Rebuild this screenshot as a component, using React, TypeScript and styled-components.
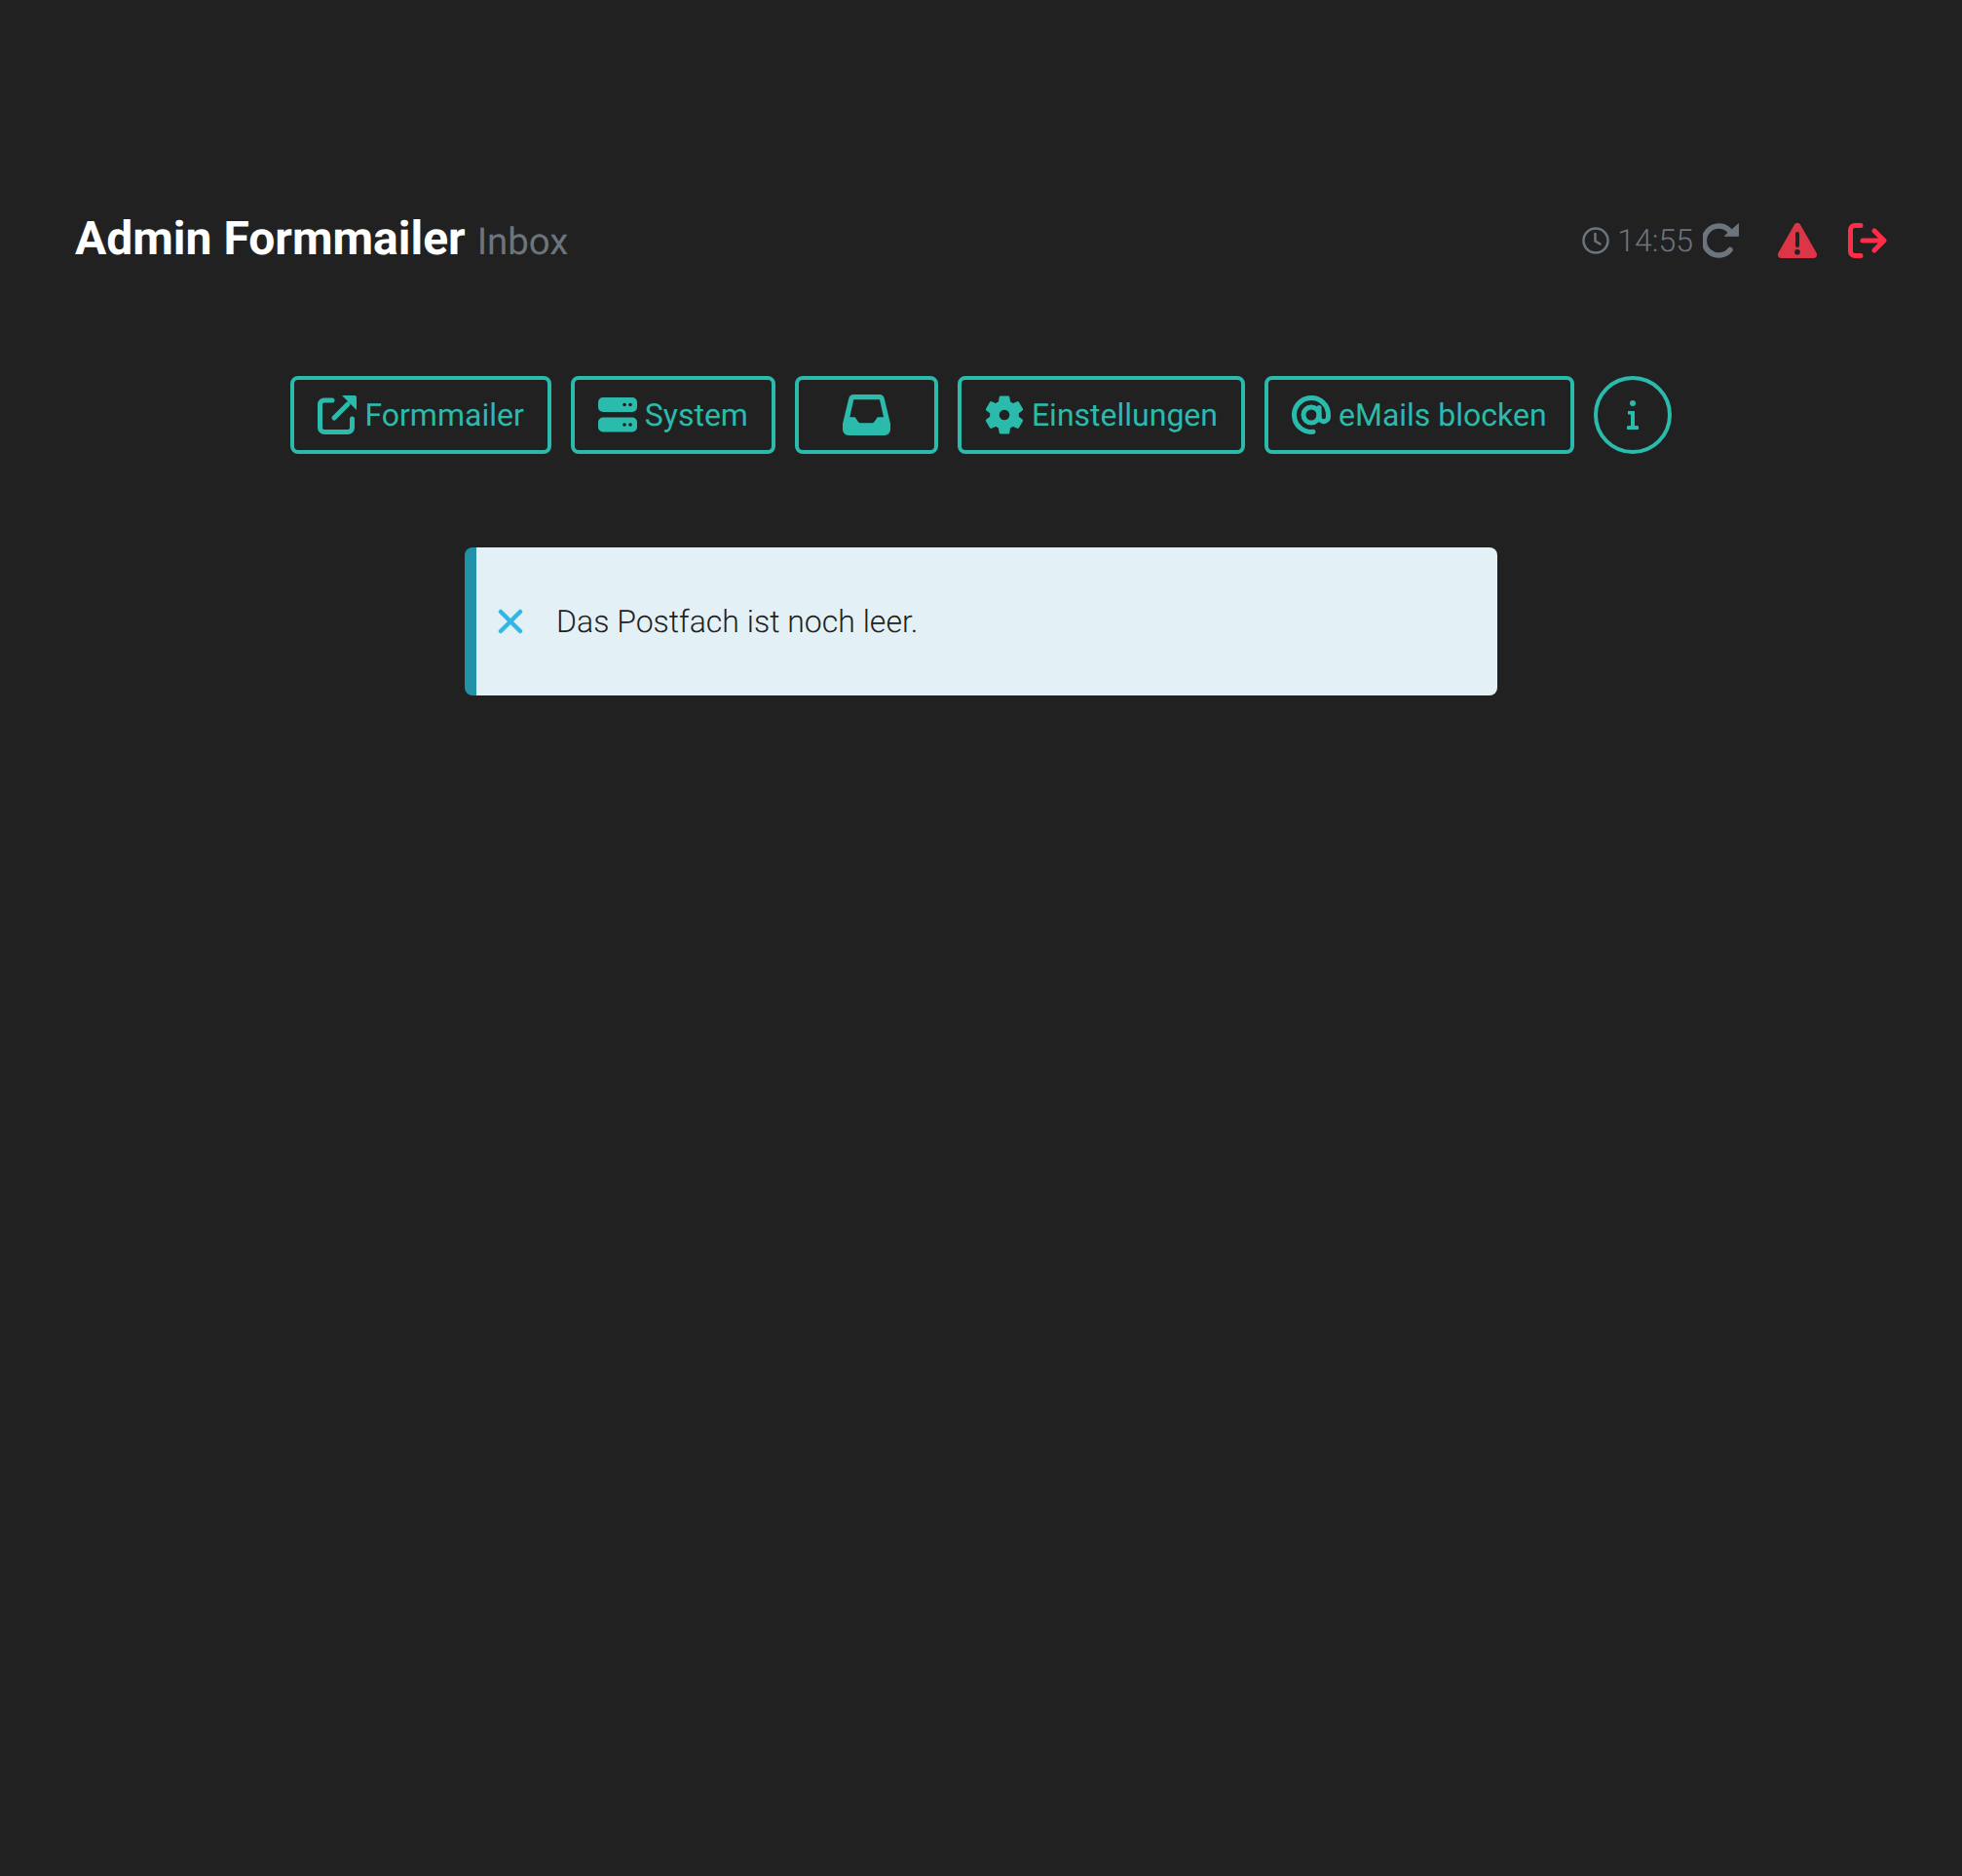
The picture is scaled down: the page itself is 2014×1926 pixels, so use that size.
import React from 'react'
import styled, { createGlobalStyle } from 'styled-components'

const GlobalStyle = createGlobalStyle`
  html, body {
    margin: 0;
    padding: 0;
    background: #212121;
  }
  body {
    font-family: Roboto, "Liberation Sans", sans-serif;
    text-rendering: geometricPrecision;
  }
`

const teal = '#2bbbad'
const danger = '#dc3545'
const logoutRed = '#ff2d46'
const muted = '#6c757d'

const Page = styled.div`
  min-height: 1926px;
  box-sizing: border-box;
  padding: 207px 77px 0;
  background: #212121;
`

const Header = styled.header`
  display: flex;
  align-items: center;
  justify-content: space-between;
  height: 80px;
`

const Title = styled.h1`
  margin: 0;
  font-size: 48px;
  line-height: 80px;
  font-weight: 700;
  color: #fff;
`

const SubTitle = styled.small`
  margin-left: 12px;
  font-size: 38.4px;
  font-weight: 400;
  color: ${muted};
`

const Status = styled.div`
  display: flex;
  align-items: center;
  color: ${muted};
`

const Time = styled.span`
  margin: 0 10px 0 8px;
  font-size: 32px;
  font-weight: 300;
`

const ActionIcon = styled.svg<{ $gap?: number }>`
  display: block;
  margin-left: ${(p) => p.$gap ?? 0}px;
`

const Nav = styled.nav`
  display: flex;
  justify-content: center;
  gap: 20px;
  margin-top: 99px;
`

const NavButton = styled.button`
  display: flex;
  align-items: center;
  justify-content: center;
  gap: 8px;
  box-sizing: border-box;
  height: 80px;
  padding: 0 24px;
  border: 4px solid ${teal};
  border-radius: 8px;
  background: transparent;
  color: ${teal};
  font-family: inherit;
  font-size: 32px;
  font-weight: 400;
  text-rendering: geometricPrecision;
`

const WideIconButton = styled(NavButton)`
  width: 147px;
  padding: 0;
`

const RoundButton = styled(NavButton)`
  width: 80px;
  padding: 0;
  border-radius: 50%;
`

const Alert = styled.div`
  display: flex;
  align-items: center;
  gap: 34px;
  box-sizing: border-box;
  width: 1060px;
  height: 152px;
  margin: 96px auto 0;
  padding-left: 22px;
  border-left: 12px solid #2191a8;
  border-radius: 8px;
  background: #e3f1f6;
  color: #212121;
  font-size: 32px;
  font-weight: 300;
`

const ExternalLinkIcon = () => (
  <svg width="40" height="40" viewBox="0 0 40 40" fill="none">
    <path d="M15 5H6.5A4 4 0 0 0 2.500 9v24a4.500 4.500 0 0 0 4.500 4.500h24a4.500 4.500 0 0 0 4.500-4.500V24" stroke={teal} strokeWidth="5" strokeLinecap="round" />
    <path d="M17 23 31 9" stroke={teal} strokeWidth="5" strokeLinecap="round" />
    <path d="M25 0h13a2 2 0 0 1 2 2v13z" fill={teal} />
  </svg>
)

const ServerIcon = () => (
  <svg width="40" height="36" viewBox="0 0 40 36" fill="none">
    <rect y="0" width="40" height="15" rx="5" fill={teal} />
    <rect y="20.500" width="40" height="15" rx="5" fill={teal} />
    <circle cx="27" cy="7.500" r="1.800" fill="#212121" />
    <circle cx="33" cy="7.500" r="1.800" fill="#212121" />
    <circle cx="27" cy="28" r="1.800" fill="#212121" />
    <circle cx="33" cy="28" r="1.800" fill="#212121" />
  </svg>
)

const InboxIcon = () => (
  <svg width="49" height="42" viewBox="0 0 49 42">
    <path
      fillRule="evenodd"
      fill={teal}
      d="M11.500 0h26a5.500 5.500 0 0 1 5.300 4.200L49 30v6a6 6 0 0 1-6 6H6a6 6 0 0 1-6-6v-6L6.200 4.200A5.500 5.500 0 0 1 11.500 0zM11.300 5.300 7.300 23.300h5.400l3 4.500q1 1.500 3 1.500h11q2 0 3-1.500l3-4.500H42l-4-18z"
    />
  </svg>
)

const GearIcon = () => (
  <svg width="40" height="40" viewBox="2.300 1.900 19.400 20.200">
    <path
      fill={teal}
      stroke={teal}
      strokeWidth="0.600"
      strokeLinejoin="round"
      d="M19.140 12.940c.04-.3.06-.61.06-.94 0-.32-.02-.64-.07-.94l2.030-1.580c.18-.14.23-.41.12-.61l-1.920-3.320c-.12-.22-.37-.29-.59-.22l-2.390.96c-.5-.38-1.030-.7-1.620-.94L14.400 2.810c-.04-.24-.24-.41-.48-.41h-3.840c-.24 0-.43.17-.47.41L9.250 5.350c-.59.24-1.130.57-1.620.94L5.240 5.330c-.22-.08-.47 0-.59.22L2.740 8.870c-.12.210-.08.47.12.610l2.030 1.580c-.05.3-.09.63-.09.94s.02.64.07.94l-2.030 1.580c-.18.14-.23.41-.12.61l1.920 3.320c.12.22.37.29.59.22l2.390-.96c.5.38 1.030.7 1.620.94l.36 2.540c.05.24.24.41.48.41h3.840c.24 0 .44-.17.47-.41l.36-2.540c.59-.24 1.130-.56 1.620-.94l2.390.96c.22.08.47 0 .59-.22l1.920-3.320c.12-.22.07-.47-.12-.61l-2.010-1.580zM12 15c-1.650 0-3-1.350-3-3s1.350-3 3-3 3 1.350 3 3-1.350 3-3 3z"
    />
  </svg>
)

const AtIcon = () => (
  <svg width="40" height="40" viewBox="0 0 40 40" fill="none" stroke={teal} strokeWidth="5" strokeLinecap="round">
    <path d="M22 37.300A17.500 17.500 0 1 1 37.500 20v2a4.700 4.700 0 0 1-9.400 0v-9.500" />
    <circle cx="20" cy="20" r="8" />
  </svg>
)

const InfoIcon = () => (
  <svg width="12" height="30" viewBox="0 0 12 30" fill={teal}>
    <circle cx="6" cy="3" r="3" />
    <path d="M1 11h7v15h3a1.500 1.500 0 0 1 1 1.500V30H0v-2.500A1.500 1.500 0 0 1 1.500 26H4V14.500H1z" />
  </svg>
)

const CloseIcon = () => (
  <svg width="26" height="26" viewBox="0 0 26 26" fill="none" stroke="#33b5e5" strokeWidth="4.500" strokeLinecap="round">
    <path d="M3 3 23 23M23 3 3 23" />
  </svg>
)

const App = () => (
  <Page>
    <GlobalStyle />
    <Header>
      <Title>
        Admin Formmailer<SubTitle>Inbox</SubTitle>
      </Title>
      <Status>
        <svg width="28" height="28" viewBox="0 0 28 28" fill="none" stroke={muted} strokeWidth="2.500" strokeLinecap="round">
          <circle cx="14" cy="14" r="12.500" />
          <path d="M13.500 7v7.500l5 3" />
        </svg>
        <Time>14:55</Time>
        <svg width="37" height="36" viewBox="0 0 37 36" fill="none">
          <path d="M28 27.500A15 15 0 1 1 27 7.500" stroke={muted} strokeWidth="5.500" strokeLinecap="round" />
          <path d="M36.700.7v12.600H22.300z" fill={muted} stroke={muted} strokeLinejoin="round" />
        </svg>
        <ActionIcon $gap={40} width="40" height="36" viewBox="0 0 40 36">
          <path
            fillRule="evenodd"
            fill={danger}
            d="M17 1.500a3.500 3.500 0 0 1 6 0l16.500 29A3.500 3.500 0 0 1 36.500 36h-33A3.500 3.500 0 0 1 .5 30.500zM18 11v12a2 2 0 0 0 4 0V11a2 2 0 0 0-4 0zm2 16a2.800 2.800 0 1 0 0 5.600 2.800 2.800 0 0 0 0-5.600z"
          />
        </ActionIcon>
        <ActionIcon $gap={32} width="40" height="36" viewBox="0 0 40 36" fill="none" stroke={logoutRed} strokeWidth="5" strokeLinecap="round" strokeLinejoin="round">
          <path d="M13 2.500H7A4.500 4.500 0 0 0 2.500 7v22A4.500 4.500 0 0 0 7 33.500h6" />
          <path d="M15 18h22M27 8l10 10-10 10" />
        </ActionIcon>
      </Status>
    </Header>
    <Nav>
      <NavButton>
        <ExternalLinkIcon />
        Formmailer
      </NavButton>
      <NavButton>
        <ServerIcon />
        System
      </NavButton>
      <WideIconButton>
        <InboxIcon />
      </WideIconButton>
      <NavButton>
        <GearIcon />
        Einstellungen
      </NavButton>
      <NavButton>
        <AtIcon />
        eMails blocken
      </NavButton>
      <RoundButton>
        <InfoIcon />
      </RoundButton>
    </Nav>
    <Alert>
      <CloseIcon />
      Das Postfach ist noch leer.
    </Alert>
  </Page>
)

export default App
